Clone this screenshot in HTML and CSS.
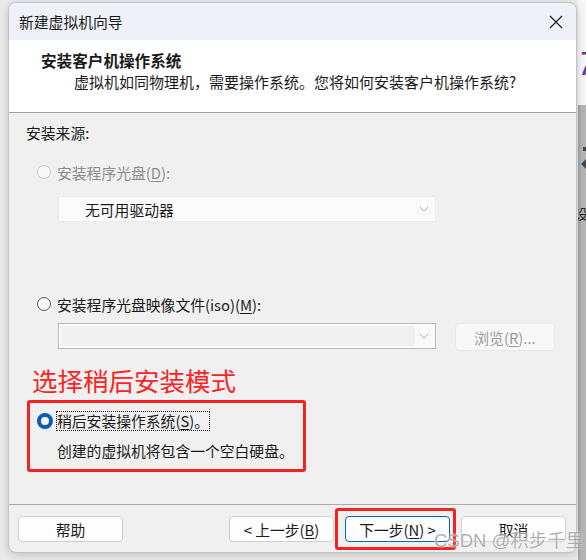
FILE: index.html
```html
<!DOCTYPE html>
<html lang="zh-CN">
<head>
  <meta charset="UTF-8">
  <title>新建虚拟机向导</title>
  <link rel="stylesheet" href="styles.css">
</head>
<body>

  <!-- window behind the dialog, only its left edge shows -->
  <div class="behind">
    <div class="behind-top"><span class="seven">7</span></div>
    <div class="behind-body">
      <span class="dot"></span>
      <span class="arrow"></span>
      <span class="cut">设</span>
    </div>
  </div>

  <div class="dialog">
    <div class="titlebar">
      <span>新建虚拟机向导</span>
      <svg class="close" width="14" height="14" viewBox="0 0 14 14">
        <path d="M1 1 L13 13 M13 1 L1 13" stroke="#1a1a1a" stroke-width="1.1" fill="none"/>
      </svg>
    </div>

    <div class="header">
      <div class="header-title">安装客户机操作系统</div>
      <div class="header-sub">虚拟机如同物理机，需要操作系统。您将如何安装客户机操作系统?</div>
    </div>

    <div class="content">
      <div class="group-label">安装来源:</div>

      <div class="option disabled">
        <span class="radio"></span>
        <span>安装程序光盘(<u>D</u>):</span>
      </div>
      <div class="select plain">
        <span>无可用驱动器</span>
        <svg class="chev" width="10" height="6" viewBox="0 0 10 6"><path d="M1 1 L5 5 L9 1" stroke="#a8a8a8" fill="none"/></svg>
      </div>

      <div class="option second">
        <span class="radio"></span>
        <span>安装程序光盘映像文件(iso)(<u>M</u>):</span>
      </div>
      <div class="file-row">
        <div class="select combo">
          <div class="combo-field"></div>
          <svg class="chev" width="10" height="6" viewBox="0 0 10 6"><path d="M1 1 L5 5 L9 1" stroke="#a8a8a8" fill="none"/></svg>
        </div>
        <div class="browse">浏览(<u>R</u>)...</div>
      </div>

      <div class="note">选择稍后安装模式</div>

      <div class="later-box">
        <div class="option checked">
          <span class="radio"></span>
          <span class="focus">稍后安装操作系统(<u>S</u>)。</span>
        </div>
        <div class="later-text">创建的虚拟机将包含一个空白硬盘。</div>
      </div>
    </div>

    <div class="footer">
      <div class="btn">帮助</div>
      <div class="spacer"></div>
      <div class="btn">&lt; 上一步(<u>B</u>)</div>
      <div class="btn default">下一步(<u>N</u>) &gt;<span class="mark"></span></div>
      <div class="btn">取消</div>
    </div>
  </div>

  <div class="watermark">CSDN @积步千里</div>

</body>
</html>
```

FILE: styles.css
```css
body {
  margin: 0;
  width: 586px;
  height: 560px;
  overflow: hidden;
  position: relative;
  background: #ebebeb;
  font-family: "Noto Sans CJK SC", "Noto Sans", sans-serif;
  font-size: 14.8px;
  color: #1a1a1a;
}
u {
  text-decoration: underline;
  text-underline-offset: 2px;
}

.behind {
  position: absolute;
  left: 578px;
  top: 0;
  width: 8px;
  height: 560px;
  overflow: hidden;
}
.behind-top {
  height: 105px;
  background: #f6f6f6;
  position: relative;
}
.seven {
  position: absolute;
  left: 0;
  top: 46px;
  font-size: 34px;
  line-height: 34px;
  font-style: italic;
  color: #7030a8;
  font-family: "Liberation Sans", sans-serif;
}
.behind-body {
  height: 455px;
  background: #b4b4b4;
  border-left: 2px solid #a6a6a6;
  position: relative;
}
.dot {
  position: absolute;
  left: 3px;
  top: 42px;
  width: 3px;
  height: 4px;
  background: #3c4852;
}
.arrow {
  position: absolute;
  left: 1px;
  top: 54px;
  border-right: 5px solid #3c4852;
  border-top: 5px solid transparent;
  border-bottom: 5px solid transparent;
}
.cut {
  position: absolute;
  left: -6px;
  top: 98px;
  font-size: 14px;
  color: #222;
}

.dialog {
  margin: 2px 0 0 8px;
  width: 567px;
  height: 549px;
  border: 1px solid #c4c4c4;
  border-radius: 8px;
  overflow: hidden;
  background: #f0f0f0;
  box-shadow: 0 2px 8px rgba(0, 0, 0, 0.18);
  display: flex;
  flex-direction: column;
  position: relative;
  z-index: 1;
}

.titlebar {
  height: 37px;
  background: #eff1f8;
  display: flex;
  align-items: center;
  justify-content: space-between;
  padding: 0 13px 0 10px;
}
.close {
  margin-top: 1px;
}

.header {
  height: 73px;
  box-sizing: border-box;
  background: #fff;
  border-bottom: 1px solid #a0a0a0;
  padding: 10px 0 0 32px;
}
.header-title {
  font-weight: bold;
  font-size: 15.6px;
  line-height: 20px;
}
.header-sub {
  margin: 2px 0 0 33px;
  line-height: 20px;
  font-size: 15px;
}

.content {
  height: 392px;
  box-sizing: border-box;
  padding: 10px 0 0 17px;
  border-bottom: 1px solid #a9a9a9;
}
.group-label {
  line-height: 20px;
}

.option {
  display: flex;
  align-items: center;
  height: 20px;
  margin: 19px 0 0 11px;
}
.option .radio {
  width: 12px;
  height: 12px;
  border-radius: 50%;
  border: 1px solid #5a5a5a;
  background: #f4f4f4;
  margin-right: 6px;
}
.option.disabled {
  color: #8c8c8c;
}
.option.disabled .radio {
  border-color: #c6c6c6;
  background: #f8f8f8;
}
.option.second {
  margin-top: 72px;
}

.select {
  width: 378px;
  height: 26px;
  box-sizing: border-box;
  margin: 14px 0 0 32px;
  display: flex;
  align-items: center;
  justify-content: space-between;
  padding: 0 6px 0 26px;
}
.select.plain {
  background: #fbfbfb;
  border: 1px solid #ebebeb;
  border-radius: 2px;
}
.chev {
  flex: none;
}

.file-row {
  display: flex;
  align-items: flex-start;
  margin-top: 9px;
}
.select.combo {
  margin: 0 0 0 32px;
  background: #fbfbfb;
  border: 1px solid #b9b9b9;
  padding: 2px 6px 2px 2px;
  align-items: stretch;
}
.combo-field {
  width: 354px;
  background: #f0f0f0;
}
.combo .chev {
  align-self: center;
}
.browse {
  margin-left: 19px;
  width: 100px;
  height: 28px;
  box-sizing: border-box;
  background: #f8f8f8;
  border: 1px solid #e9e9e9;
  border-radius: 4px;
  color: #9a9a9a;
  display: flex;
  align-items: center;
  justify-content: center;
}

.note {
  margin: 14px 0 0 6px;
  color: #fb2323;
  font-size: 25.5px;
  line-height: 30px;
}

.later-box {
  margin: 5px 0 0 1px;
  width: 279px;
  height: 72px;
  box-sizing: border-box;
  border: 3px solid #f52320;
  border-radius: 3px;
  padding: 8px 0 0 7px;
}
.later-box .option {
  margin: 0;
}
.option.checked .radio {
  width: 8px;
  height: 8px;
  border: 4px solid #0a5fb4;
  background: #fff;
  margin-right: 3px;
}
.focus {
  border: 1px dotted #222;
  padding: 0;
  line-height: 18px;
}
.later-text {
  margin: 10px 0 0 20px;
  line-height: 20px;
}

.footer {
  flex: 1;
  display: flex;
  padding: 11px 10px 0 9px;
  gap: 11px;
}
.spacer {
  flex: 1;
}
.btn {
  width: 105px;
  height: 26px;
  box-sizing: border-box;
  background: #fdfdfd;
  border: 1px solid #d0d0d0;
  border-radius: 4px;
  display: flex;
  align-items: center;
  justify-content: center;
  position: relative;
}
.btn.default {
  border-color: #0067c0;
}
.mark {
  position: absolute;
  left: -11px;
  top: -9px;
  right: -7px;
  bottom: -9px;
  border: 3px solid #f52320;
  border-radius: 3px;
}

.watermark {
  position: absolute;
  left: 434px;
  top: 528px;
  z-index: 2;
  white-space: nowrap;
  font-size: 18.5px;
  line-height: 26px;
  color: rgba(150, 150, 150, 0.75);
  text-shadow: 0 0 2px #fff;
  font-family: "Liberation Sans", "Noto Sans CJK SC", sans-serif;
}
```
